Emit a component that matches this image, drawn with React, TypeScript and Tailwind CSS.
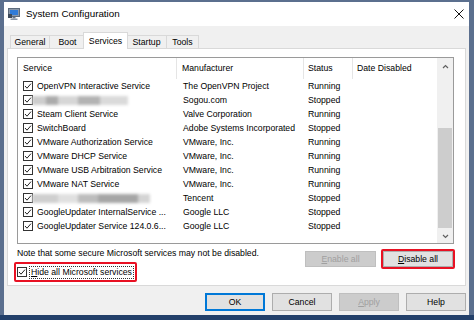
import type { ReactNode } from 'react';

interface ServiceRow {
  name?: string;
  maker: string;
  status: string;
  blur?: 'short' | 'long';
}

const rows: ServiceRow[] = [
  { name: 'OpenVPN Interactive Service', maker: 'The OpenVPN Project', status: 'Running' },
  { maker: 'Sogou.com', status: 'Stopped', blur: 'short' },
  { name: 'Steam Client Service', maker: 'Valve Corporation', status: 'Running' },
  { name: 'SwitchBoard', maker: 'Adobe Systems Incorporated', status: 'Stopped' },
  { name: 'VMware Authorization Service', maker: 'VMware, Inc.', status: 'Running' },
  { name: 'VMware DHCP Service', maker: 'VMware, Inc.', status: 'Running' },
  { name: 'VMware USB Arbitration Service', maker: 'VMware, Inc.', status: 'Running' },
  { name: 'VMware NAT Service', maker: 'VMware, Inc.', status: 'Running' },
  { maker: 'Tencent', status: 'Stopped', blur: 'long' },
  { name: 'GoogleUpdater InternalService ...', maker: 'Google LLC', status: 'Stopped' },
  { name: 'GoogleUpdater Service 124.0.6...', maker: 'Google LLC', status: 'Stopped' },
];

const tabs = [
  { label: 'General', width: 'w-[39px]' },
  { label: 'Boot', width: 'w-[36px]' },
  { label: 'Services', width: 'w-[45px]', active: true },
  { label: 'Startup', width: 'w-[40px]' },
  { label: 'Tools', width: 'w-[33px]', last: true },
];

function CheckBox() {
  return (
    <svg width="10" height="10" viewBox="0 0 10 10" className="shrink-0">
      <rect x="0.5" y="0.5" width="9" height="9" fill="#fff" stroke="#333" />
      <path d="M2 5 L4 7.2 L8 2.6" fill="none" stroke="#222" strokeWidth="1" />
    </svg>
  );
}

function Chevron({ up }: { up?: boolean }) {
  return (
    <svg width="7" height="5" viewBox="0 0 7 5">
      <polyline
        points={up ? '1,4 3.5,1.5 6,4' : '1,1 3.5,3.5 6,1'}
        fill="none"
        stroke="#606060"
        strokeWidth="1.2"
      />
    </svg>
  );
}

// smudged-out service names, as in the screenshot
function Smudge({ long }: { long?: boolean }) {
  const parts = long
    ? [
        ['w-[26px]', 'bg-[#cfcfcf]'],
        ['w-[20px]', 'bg-[#e0e0e0]'],
        ['w-[20px]', 'bg-[#bdbdbd]'],
        ['w-[40px]', 'bg-[#a6a6a6]'],
        ['w-[12px]', 'bg-[#d4d4d4]'],
      ]
    : [
        ['w-[14px]', 'bg-[#cdcdcd]'],
        ['w-[12px]', 'bg-[#ababab]'],
        ['w-[20px]', 'bg-[#d6d6d6]'],
        ['w-[22px]', 'bg-[#b3b3b3]'],
        ['w-[28px]', 'bg-[#dadada]'],
      ];
  return (
    <div className="-ml-[5px] flex h-[10px] items-center blur-[1.5px]">
      {parts.map(([w, bg], i) => (
        <span key={i} className={`h-[9px] ${w} ${bg}`} />
      ))}
    </div>
  );
}

function Button({
  children,
  disabled,
  primary,
  className = '',
}: {
  children: ReactNode;
  disabled?: boolean;
  primary?: boolean;
  className?: string;
}) {
  return (
    <div
      className={`flex items-center justify-center ${
        disabled
          ? 'border border-[#bfbfbf] bg-[#cccccc] text-[#a0a0a0]'
          : primary
          ? 'border-2 border-[#0078d7] bg-[#e1e1e1]'
          : 'border border-[#adadad] bg-[#e1e1e1]'
      } ${className}`}
    >
      {children}
    </div>
  );
}

export default function App() {
  return (
    <div className="flex h-[320px] w-[474px] flex-col border-b-[5px] border-[#23406a] bg-[#5b6f8e] pl-[4px] pr-[5px] pt-[2px] font-['Liberation_Sans',Arial,sans-serif] text-[8.7px] leading-none text-black">
      <div className="flex flex-1 flex-col bg-[#f0f0f0]">
        {/* Title bar */}
        <div className="flex h-[24px] items-center bg-white pl-[4px] pr-[5px]">
          <svg width="12" height="12" viewBox="0 0 12 12" className="shrink-0">
            <rect x="0.5" y="0.5" width="11" height="8" fill="#8b98a8" stroke="#5d6b7c" />
            <rect x="2" y="2" width="8" height="5" fill="#2f7bd8" />
            <rect x="4.5" y="9" width="3" height="1.5" fill="#6b7787" />
            <rect x="2.5" y="10.5" width="7" height="1.5" fill="#8b98a8" />
            <rect x="0" y="6" width="4" height="4" fill="#3d4a5a" />
          </svg>
          <span className="ml-[6px] text-[9.8px]">System Configuration</span>
          <svg width="10" height="10" viewBox="0 0 10 10" className="ml-auto">
            <path d="M0.5 0.5 L9.5 9.5 M9.5 0.5 L0.5 9.5" stroke="#111" strokeWidth="1" />
          </svg>
        </div>

        {/* Tabs */}
        <div className="flex h-[22px] items-end pl-[6px]">
          {tabs.map((tab) =>
            tab.active ? (
              <div
                key={tab.label}
                className={`relative z-10 -mx-[2px] -mb-px flex h-[17px] ${tab.width} items-center justify-center border border-b-0 border-[#d9d9d9] bg-white`}
              >
                {tab.label}
              </div>
            ) : (
              <div
                key={tab.label}
                className={`flex h-[13px] ${tab.width} items-center justify-center border-l border-t border-[#d9d9d9] ${
                  tab.last ? 'border-r' : ''
                }`}
              >
                {tab.label}
              </div>
            )
          )}
        </div>

        {/* Panel */}
        <div className="mx-[3px] flex h-[238px] flex-col border border-[#d9d9d9] bg-white pl-[9px] pr-[11px] pt-[8px]">
          <div className="flex h-[187px] w-[437px] border border-[#9a9a9a]">
            <div className="flex flex-1 flex-col">
              <div className="flex h-[21px] items-center">
                <div className="flex h-full w-[159px] items-center border-r border-[#e5e5e5] pl-[5px]">Service</div>
                <div className="flex h-full w-[127px] items-center border-r border-[#e5e5e5] pl-[5px]">Manufacturer</div>
                <div className="flex h-full w-[49px] items-center border-r border-[#e5e5e5] pl-[4px]">Status</div>
                <div className="flex h-full flex-1 items-center pl-[4px]">Date Disabled</div>
              </div>
              {rows.map((row, i) => (
                <div key={i} className="flex h-[14px] items-center">
                  <div className="flex w-[159px] items-center gap-[4px] pl-[5px]">
                    <CheckBox />
                    {row.name ? (
                      <span className="whitespace-nowrap">{row.name}</span>
                    ) : (
                      <Smudge long={row.blur === 'long'} />
                    )}
                  </div>
                  <div className="w-[127px] whitespace-nowrap pl-[6px]">{row.maker}</div>
                  <div className="w-[49px] pl-[4px]">{row.status}</div>
                </div>
              ))}
            </div>

            {/* Scrollbar */}
            <div className="flex w-[16px] flex-col bg-[#f0f0f0]">
              <div className="flex h-[17px] items-center justify-center">
                <Chevron up />
              </div>
              <div className="flex-1 px-px">
                <div className="mt-[53px] h-[100px] bg-[#cdcdcd]" />
              </div>
              <div className="flex h-[14px] items-center justify-center">
                <Chevron />
              </div>
            </div>
          </div>

          <div className="flex justify-between">
            <div className="flex flex-col items-start">
              <div className="mt-[4px] h-[11px] whitespace-nowrap leading-[11px]">
                Note that some secure Microsoft services may not be disabled.
              </div>
              <div className="-ml-[3px] mt-[3px] flex h-[20px] items-center rounded-[2px] border-2 border-[#e81123] pl-px pr-px">
                <CheckBox />
                <span className="ml-[2px] flex h-[13px] items-center whitespace-nowrap border border-dotted border-[#333] px-px">
                  <u>H</u>ide all Microsoft services
                </span>
              </div>
            </div>
            <div className="mt-[5px] flex items-center gap-[5px] self-start">
              <Button disabled className="h-[16px] w-[71px]">
                <u>E</u>nable all
              </Button>
              <div className="-mr-px rounded-[2px] border-2 border-[#e81123]">
                <Button className="h-[16px] w-[70px]">
                  <u>D</u>isable all
                </Button>
              </div>
            </div>
          </div>
        </div>

        {/* Dialog buttons */}
        <div className="flex justify-end gap-[7px] pr-[3px] pt-[7px]">
          <Button primary className="h-[18px] w-[60px]">OK</Button>
          <Button className="h-[18px] w-[60px]">Cancel</Button>
          <Button disabled className="h-[18px] w-[60px]">
            <u>A</u>pply
          </Button>
          <Button className="h-[18px] w-[60px]">Help</Button>
        </div>
      </div>
    </div>
  );
}
